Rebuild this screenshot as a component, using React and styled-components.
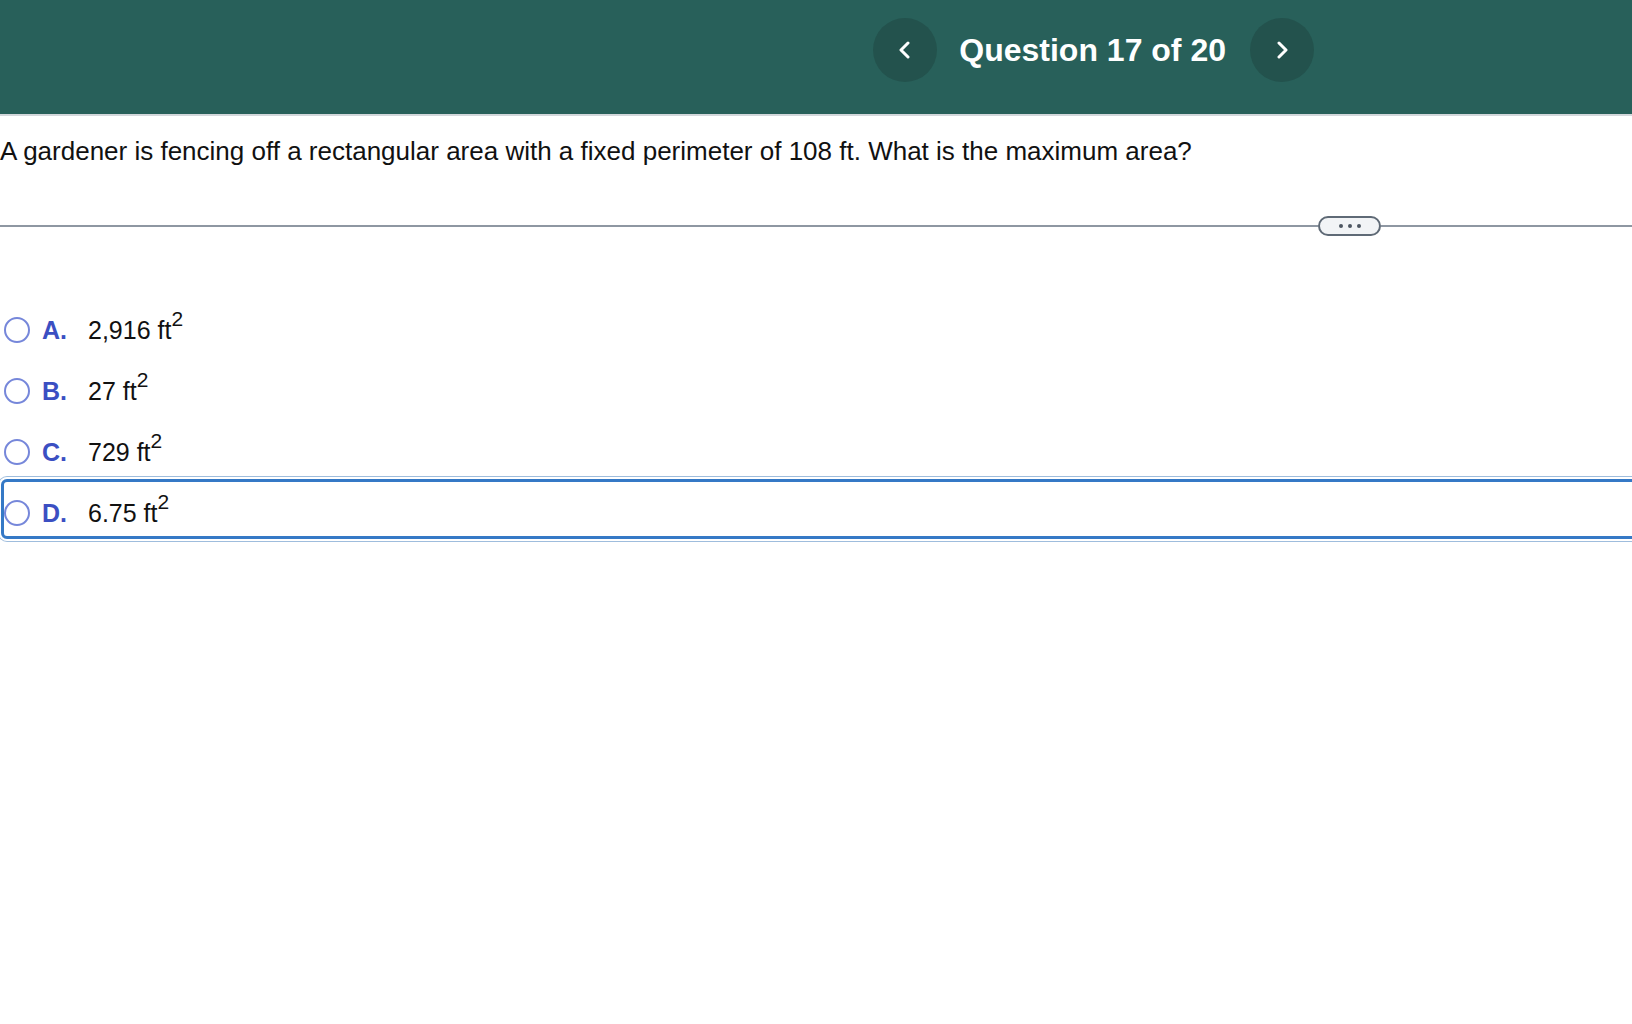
import styled, { createGlobalStyle } from "styled-components";

const GlobalStyle = createGlobalStyle`
  html, body {
    margin: 0;
    padding: 0;
    background: #ffffff;
    font-family: "Liberation Sans", Arial, sans-serif;
    color: #111111;
  }
  body {
    overflow-x: hidden;
  }
`;

const Header = styled.header`
  height: 116px;
  box-sizing: border-box;
  background: #28605a;
  border-bottom: 2px solid #d3d7db;
  display: flex;
  align-items: flex-start;
  justify-content: flex-end;
  padding: 18px 318px 0 0;
`;

const NavButton = styled.button`
  width: 64px;
  height: 64px;
  border-radius: 50%;
  border: none;
  padding: 0;
  background: #23524d;
  display: flex;
  align-items: center;
  justify-content: center;
  cursor: pointer;
`;

const Title = styled.h1`
  margin: 0 24px 0 22px;
  font-size: 32px;
  font-weight: 700;
  color: #ffffff;
  line-height: 64px;
  white-space: nowrap;
`;

const Question = styled.p`
  margin: 20px 0 0;
  font-size: 26px;
  line-height: 30px;
`;

const Divider = styled.div`
  display: flex;
  align-items: center;
  height: 20px;
  margin-top: 50px;
`;

const Rule = styled.div`
  height: 2px;
  background: #8e97a2;
  flex: ${(p) => (p.$grow ? 1 : "none")};
  width: ${(p) => (p.$grow ? "auto" : `${p.$w}px`)};
`;

const Pill = styled.button`
  width: 63px;
  height: 20px;
  box-sizing: border-box;
  border: 2px solid #5f6a76;
  border-radius: 10px;
  background: #f2f4f6;
  display: flex;
  align-items: center;
  justify-content: center;
  gap: 5px;
  padding: 0;
`;

const Dot = styled.span`
  width: 4px;
  height: 4px;
  border-radius: 50%;
  background: #4d5661;
`;

const Options = styled.div`
  margin-top: 57px;
  overflow: hidden;
  padding: 3px 0;
`;

const OptionRow = styled.label`
  display: flex;
  align-items: center;
  box-sizing: border-box;
  height: 60px;
  margin: 0 -60px 1px 1px;
  padding-top: 8px;
  border: 3px solid ${(p) => (p.$selected ? "#3579c6" : "transparent")};
  border-radius: 6px;
  box-shadow: ${(p) =>
    p.$selected ? "0 0 0 2px #ffffff, 0 0 0 3px #9fbddd" : "none"};
  cursor: pointer;
`;

const Radio = styled.span`
  width: 26px;
  height: 26px;
  box-sizing: border-box;
  border-radius: 50%;
  border: 2.5px solid #7687da;
  background: #ffffff;
  flex: none;
`;

const Letter = styled.span`
  font-size: 25px;
  font-weight: 700;
  color: #3b4fc2;
  margin-left: 12px;
  width: 46px;
`;

const Value = styled.span`
  font-size: 25px;
  line-height: 28px;
`;

const Sup = styled.sup`
  font-size: 21px;
  line-height: 0;
  vertical-align: 0.62em;
`;

function Chevron({ dir }) {
  const d = dir === "left" ? "M10 2 L3 9 L10 16" : "M4 2 L11 9 L4 16";
  return (
    <svg width="14" height="18" viewBox="0 0 14 18">
      <path
        d={d}
        fill="none"
        stroke="#ffffff"
        strokeWidth="3"
        strokeLinecap="round"
        strokeLinejoin="round"
      />
    </svg>
  );
}

const answers = [
  { key: "A.", value: "2,916 ft" },
  { key: "B.", value: "27 ft" },
  { key: "C.", value: "729 ft" },
  { key: "D.", value: "6.75 ft", selected: true },
];

export default function App() {
  return (
    <>
      <GlobalStyle />
      <Header>
        <NavButton aria-label="Previous question">
          <Chevron dir="left" />
        </NavButton>
        <Title>Question 17 of 20</Title>
        <NavButton aria-label="Next question">
          <Chevron dir="right" />
        </NavButton>
      </Header>
      <Question>
        A gardener is fencing off a rectangular area with a fixed perimeter of
        108 ft. What is the maximum area?
      </Question>
      <Divider>
        <Rule $grow />
        <Pill aria-label="More">
          <Dot />
          <Dot />
          <Dot />
        </Pill>
        <Rule $w={251} />
      </Divider>
      <Options>
        {answers.map((a) => (
          <OptionRow key={a.key} $selected={a.selected}>
            <Radio />
            <Letter>{a.key}</Letter>
            <Value>
              {a.value}
              <Sup>2</Sup>
            </Value>
          </OptionRow>
        ))}
      </Options>
    </>
  );
}
